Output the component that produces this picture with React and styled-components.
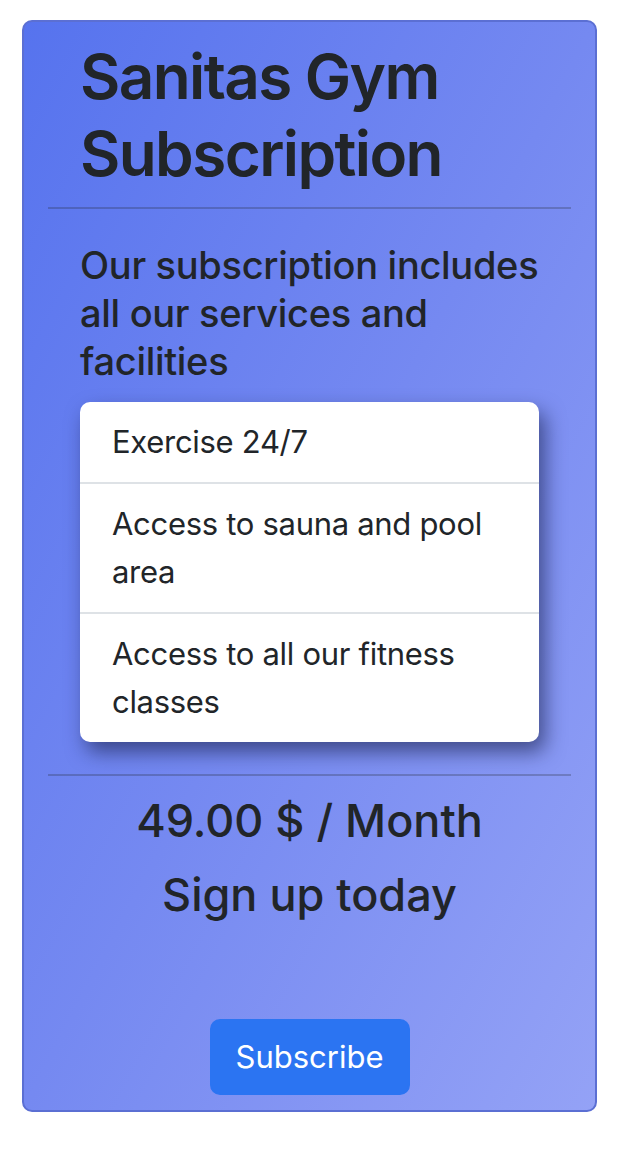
import styled, { createGlobalStyle } from "styled-components";

const GlobalStyle = createGlobalStyle`
    * {
        box-sizing: border-box;
    }
    body {
        margin: 0;
        background: #ffffff;
        font-family: Inter, "Noto Sans", sans-serif;
        color: #212529;
    }
`;

const Page = styled.div`
    padding: 20px 25px 40px 22px;
`;

const Card = styled.div`
    display: flex;
    flex-direction: column;
    width: 575px;
    height: 1092px;
    padding: 0 24px 15px;
    border: 2px solid #5b6fd3;
    border-radius: 10px;
    background: linear-gradient(to bottom right, #5673ee 0%, #7589f1 50%, #94a2f6 100%);
`;

const Section = styled.div`
    padding: 0 32px;
    text-align: ${(props) => (props.center ? "center" : "left")};
`;

const Title = styled.h1`
    margin: 16px 0 15px;
    font-size: 62px;
    font-weight: 600;
    line-height: 77px;
    letter-spacing: -1.6px;
`;

const Rule = styled.hr`
    margin: 0;
    border: 0;
    border-top: 2px solid rgba(33, 37, 41, 0.25);
`;

const Lead = styled.h3`
    margin: 32px 0 17px;
    font-size: 38px;
    font-weight: 500;
    line-height: 48px;
    letter-spacing: -0.3px;
`;

const List = styled.ul`
    margin: 0 0 32px;
    padding: 0;
    list-style: none;
    background: #ffffff;
    border-radius: 10px;
    box-shadow: 6px 10px 20px rgba(22, 28, 70, 0.6);
    overflow: hidden;
`;

const Item = styled.li`
    padding: 16px 32px;
    font-size: 31px;
    line-height: 48px;
    letter-spacing: -0.3px;
    & + & {
        border-top: 2px solid #dee2e6;
    }
`;

const Price = styled.h2`
    margin: ${(props) => props.margin};
    font-size: 45px;
    font-weight: 500;
    line-height: 53px;
    letter-spacing: 0;
`;

const Footer = styled.div`
    display: flex;
    justify-content: center;
    margin-top: auto;
`;

const Button = styled.button`
    padding: 12px 24px;
    border: 2px solid #2b74f2;
    border-radius: 10px;
    background: #2b74f2;
    color: #ffffff;
    font-family: Inter, "Noto Sans", sans-serif;
    font-size: 31px;
    line-height: 48px;
`;

const services = [
    "Exercise 24/7",
    "Access to sauna and pool area",
    "Access to all our fitness classes",
];

function App() {
    return (
        <Page>
            <GlobalStyle />
            <Card>
                <Section>
                    <Title>Sanitas Gym Subscription</Title>
                </Section>
                <Rule />
                <Section>
                    <Lead>Our subscription includes all our services and facilities</Lead>
                    <List>
                        {services.map((s) => (
                            <Item key={s}>{s}</Item>
                        ))}
                    </List>
                </Section>
                <Rule />
                <Section center>
                    <Price margin="18px 0 21px">49.00 $ / Month</Price>
                    <Price margin="0">Sign up today</Price>
                </Section>
                <Footer>
                    <Button>Subscribe</Button>
                </Footer>
            </Card>
        </Page>
    );
}

export default App;
